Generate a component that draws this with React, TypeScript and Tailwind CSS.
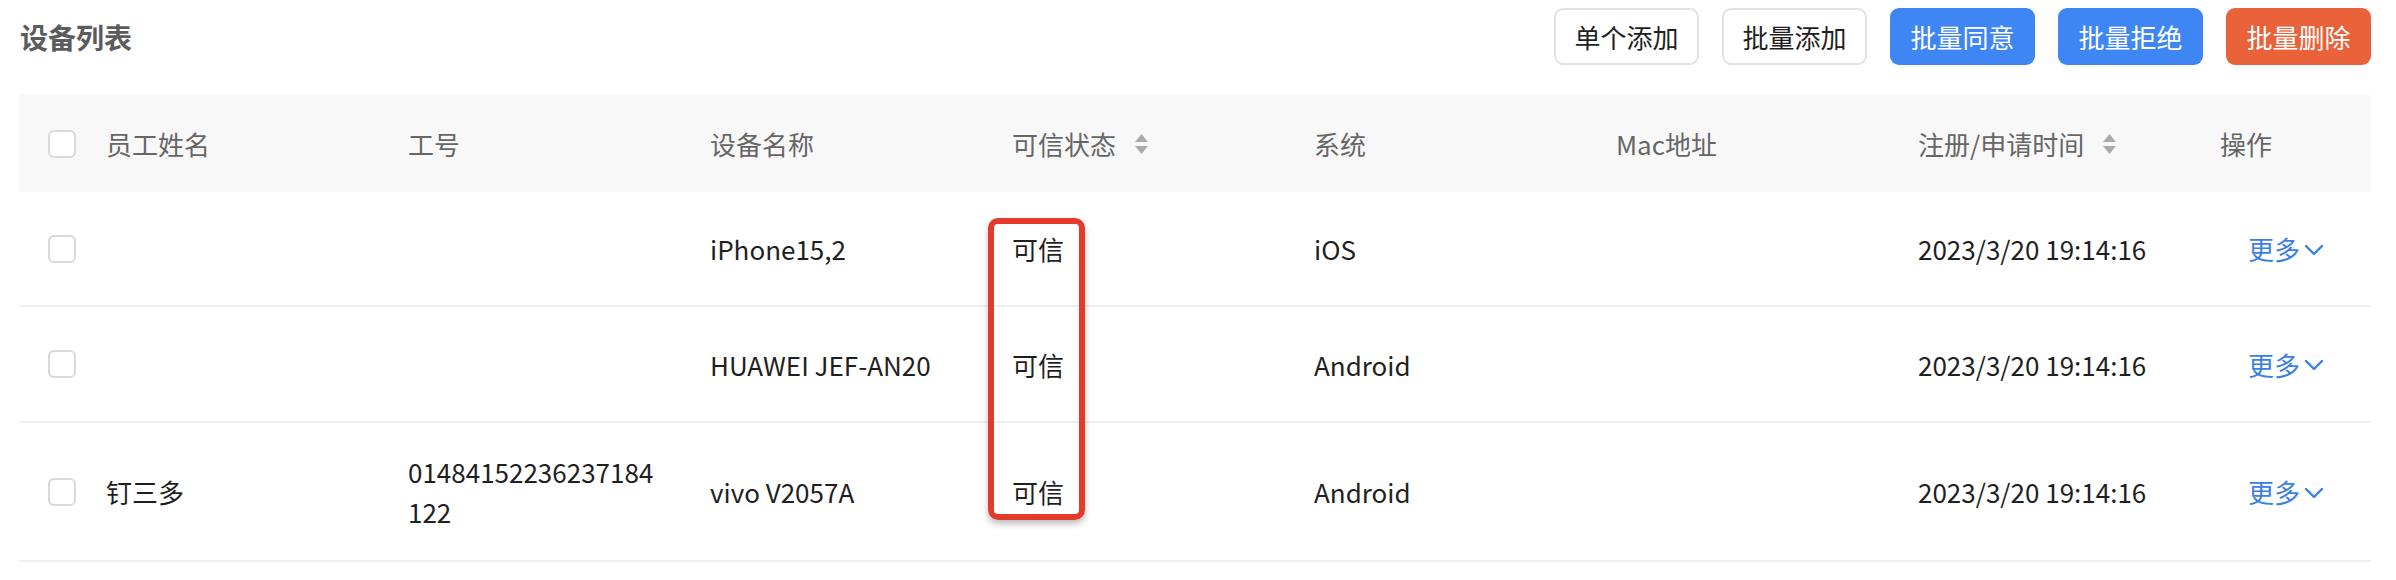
import { FC, ReactNode } from 'react';

interface Device {
  name: string;
  jobNo: string[];
  device: string;
  trust: string;
  os: string;
  mac: string;
  time: string;
  height: string;
}

const devices: Device[] = [
  { name: '', jobNo: [], device: 'iPhone15,2', trust: '可信', os: 'iOS', mac: '', time: '2023/3/20 19:14:16', height: 'h-[115px]' },
  { name: '', jobNo: [], device: 'HUAWEI JEF-AN20', trust: '可信', os: 'Android', mac: '', time: '2023/3/20 19:14:16', height: 'h-[116px]' },
  { name: '钉三多', jobNo: ['01484152236237184', '122'], device: 'vivo V2057A', trust: '可信', os: 'Android', mac: '', time: '2023/3/20 19:14:16', height: 'h-[139px]' },
];

const gridCols = 'grid grid-cols-[71px_repeat(7,302px)_1fr]';

const Checkbox: FC = () => (
  <span className="block w-[28px] h-[28px] rounded-[6px] border-2 border-[#dadada] bg-white" />
);

const SortIcon: FC = () => (
  <svg width="15" height="22" viewBox="0 0 15 22" className="ml-[18px]">
    <path d="M7.5 1 L14 9 L1 9 Z" fill="#ababab" />
    <path d="M7.5 21 L14 13 L1 13 Z" fill="#ababab" />
  </svg>
);

const HeadCell: FC<{ children: ReactNode; sort?: boolean }> = ({ children, sort }) => (
  <div className="flex items-center pl-[16px]">
    <span>{children}</span>
    {sort && <SortIcon />}
  </div>
);

const Button: FC<{ label: string; variant: 'plain' | 'blue' | 'red' }> = ({ label, variant }) => {
  const styles = {
    plain: 'bg-white border-2 border-[#e3e3e3] text-[#1f1f1f]',
    blue: 'bg-[#3f86f5] text-white',
    red: 'bg-[#e9623a] text-white',
  };
  return (
    <button
      className={`w-[145px] h-[57px] rounded-[9px] text-[26px] flex items-center justify-center ${styles[variant]}`}
    >
      {label}
    </button>
  );
};

export default function App() {
  return (
    <div
      className="w-[2396px] h-[580px] bg-white pl-[19px] pr-[25px] pt-[8px] overflow-hidden"
      style={{ fontFamily: '"Noto Sans CJK SC", "Noto Sans", sans-serif' }}
    >
      {/* Title + bulk actions */}
      <div className="flex items-center justify-between h-[57px]">
        <h1 className="pl-[1px] text-[28px] font-bold text-[#5c5c5c]">设备列表</h1>
        <div className="flex items-center gap-[23px]">
          <Button label="单个添加" variant="plain" />
          <Button label="批量添加" variant="plain" />
          <Button label="批量同意" variant="blue" />
          <Button label="批量拒绝" variant="blue" />
          <Button label="批量删除" variant="red" />
        </div>
      </div>

      {/* Device table */}
      <div className="relative mt-[30px]">
        <div className={`${gridCols} h-[97px] items-center bg-[#f8f8f8] text-[26px] text-[#666666]`}>
          <div className="pl-[29px]">
            <Checkbox />
          </div>
          <HeadCell>员工姓名</HeadCell>
          <HeadCell>工号</HeadCell>
          <HeadCell>设备名称</HeadCell>
          <HeadCell sort>可信状态</HeadCell>
          <HeadCell>系统</HeadCell>
          <HeadCell>Mac地址</HeadCell>
          <HeadCell sort>注册/申请时间</HeadCell>
          <HeadCell>操作</HeadCell>
        </div>

        {devices.map((d, i) => (
          <div
            key={i}
            className={`${gridCols} ${d.height} items-center border-b-2 border-[#efefef] text-[26px] text-[#1f1f1f]`}
          >
            <div className="pl-[29px]">
              <Checkbox />
            </div>
            <div className="pl-[16px]">{d.name}</div>
            <div className="pl-[16px] leading-[40px]">
              {d.jobNo.map((line) => (
                <div key={line}>{line}</div>
              ))}
            </div>
            <div className="pl-[16px]">{d.device}</div>
            <div className="pl-[16px]">{d.trust}</div>
            <div className="pl-[16px]">{d.os}</div>
            <div className="pl-[16px]">{d.mac}</div>
            <div className="pl-[16px]">{d.time}</div>
            <div className="pl-[44px] flex items-center text-[#3b7fe0]">
              <span>更多</span>
              <svg width="20" height="12" viewBox="0 0 20 12" className="ml-[4px] mt-[2px]">
                <polyline points="2,2 10,10 18,2" fill="none" stroke="#3b7fe0" strokeWidth="2.4" strokeLinejoin="round" strokeLinecap="round" />
              </svg>
            </div>
          </div>
        ))}

        {/* highlight frame around the trust column */}
        <div className="absolute left-[969px] top-[123px] w-[97px] h-[302px] rounded-[10px] border-[6px] border-[#e33a2c] shadow-[0_4px_6px_rgba(0,0,0,0.25)] pointer-events-none" />
      </div>
    </div>
  );
}
